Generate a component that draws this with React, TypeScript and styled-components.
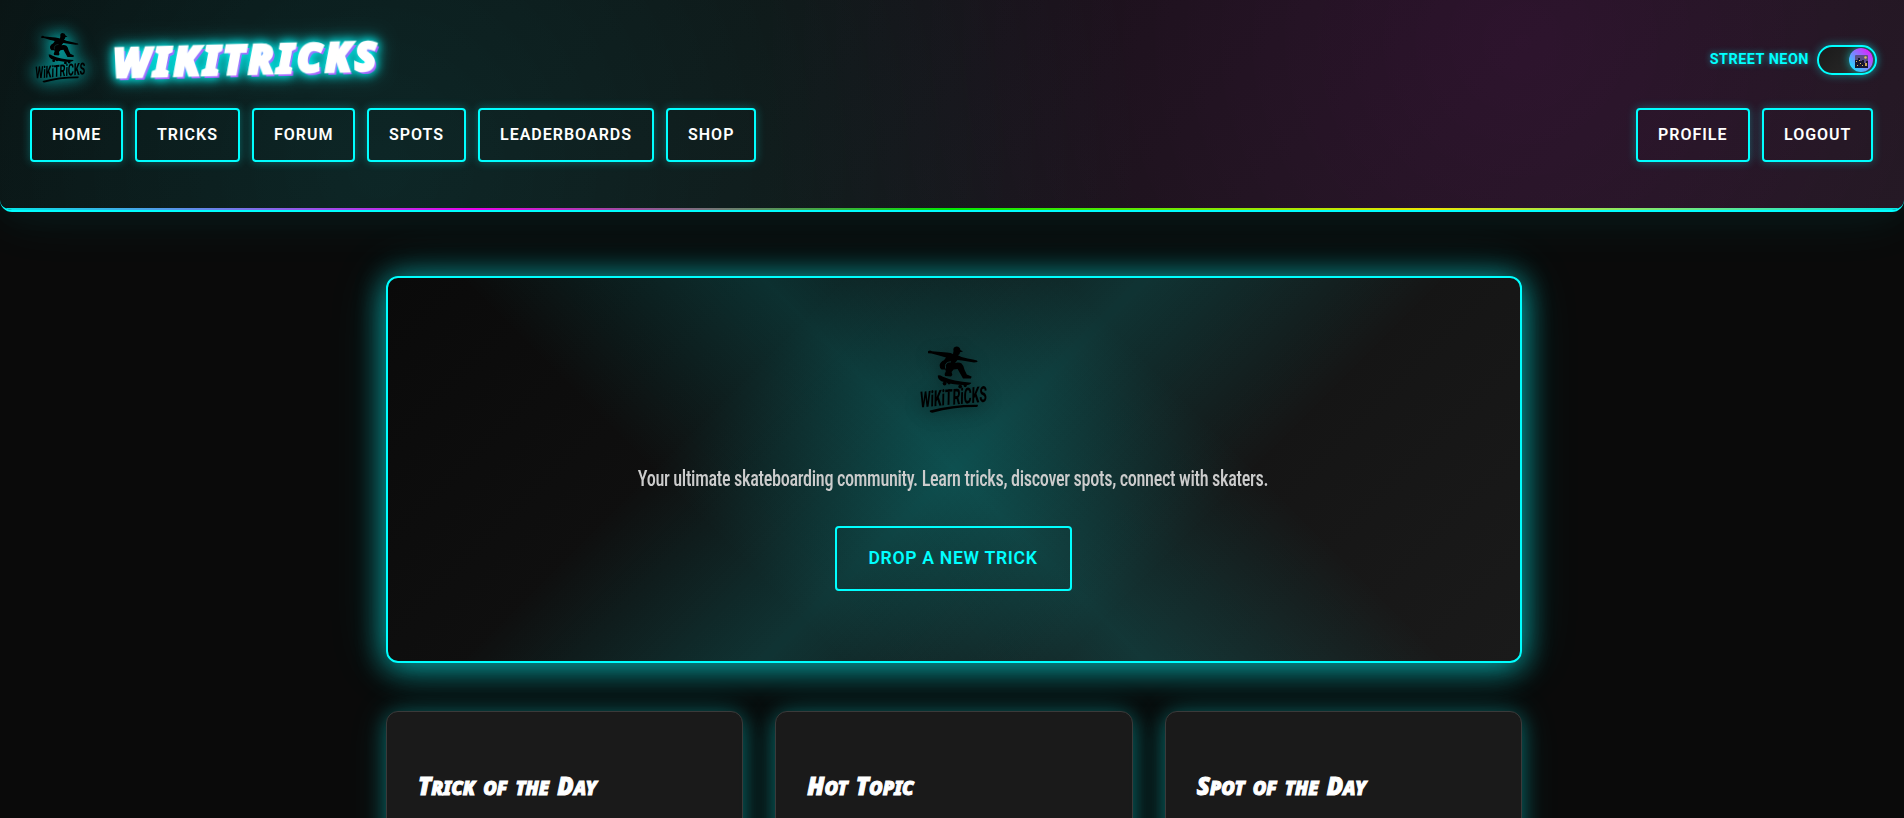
import React from "react";
import styled, { createGlobalStyle } from "styled-components";

const cyan = "#00ffff";

const GlobalStyle = createGlobalStyle`
  * { box-sizing: border-box; }
  body {
    margin: 0;
    background: #0a0a0a;
    font-family: Roboto, "Liberation Sans", sans-serif;
    color: #fff;
  }
`;

const Page = styled.div`
  height: 818px;
  overflow: hidden;
  background: #0a0a0a;
`;

const Header = styled.header`
  position: relative;
  height: 212px;
  padding: 28px 31px 0 30px;
  overflow: hidden;
  border-bottom: 2px solid ${cyan};
  border-radius: 0 0 12px 12px;
  background:
    radial-gradient(circle at 20% 80%, rgba(0, 255, 255, 0.1) 0%, transparent 50%),
    radial-gradient(circle at 80% 20%, rgba(255, 0, 255, 0.1) 0%, transparent 50%),
    linear-gradient(135deg, #0a0a0a 0%, #1a1a1a 100%);

  &::after {
    content: "";
    position: absolute;
    left: 0;
    right: 0;
    bottom: 0;
    height: 2px;
    opacity: 0.9;
    background: linear-gradient(90deg, #00ffff, #ff00ff, #00ff00, #ffff00, #00ffff);
  }
`;

const HeaderGlow = styled.div`
  border-radius: 0 0 12px 12px;
  box-shadow: 0 8px 32px rgba(0, 255, 255, 0.03), 0 4px 60px rgba(0, 255, 255, 0.07);
`;

const TopRow = styled.div`
  display: flex;
  align-items: center;
  justify-content: space-between;
  height: 60px;
  margin-bottom: 20px;
`;

const Brand = styled.div`
  display: flex;
  align-items: center;
  gap: 23px;
`;

const LogoArt = styled.svg<{ $size: number; $neon?: boolean }>`
  display: block;
  width: ${(p) => p.$size}px;
  height: ${(p) => p.$size}px;
  overflow: visible;
  filter: ${(p) =>
    p.$neon
      ? "drop-shadow(0 0 8px rgba(0, 255, 255, 0.6)) drop-shadow(0 0 8px rgba(0, 255, 255, 0.45))"
      : "drop-shadow(0 4px 8px rgba(0, 0, 0, 0.35))"};
`;

const BrandName = styled.h1`
  margin: 2px 0 0;
  font-family: "Noto Sans", sans-serif;
  font-size: 40px;
  line-height: 48px;
  font-weight: 900;
  font-style: italic;
  letter-spacing: 2.9px;
  text-transform: uppercase;
  color: #fff;
  -webkit-text-stroke: 2.4px #fff;
  transform: rotate(-1.5deg);
  text-shadow: 0 0 10px rgba(0, 255, 255, 0.6), 2.5px 2.5px 0 #c050ff;
  filter: drop-shadow(0 0 5px rgba(0, 255, 255, 0.75)) drop-shadow(0 0 8px rgba(0, 255, 255, 0.55));
`;

const ThemeControl = styled.div`
  display: flex;
  align-items: center;
  gap: 8px;
  margin: 4px -4px 0 0;
`;

const ThemeLabel = styled.span`
  font-size: 14.4px;
  font-weight: 700;
  letter-spacing: 0.5px;
  line-height: 18px;
  text-transform: uppercase;
  color: ${cyan};
  text-shadow: 0 0 6px rgba(0, 255, 255, 0.6);
`;

const Toggle = styled.div`
  display: flex;
  align-items: center;
  justify-content: flex-end;
  width: 60px;
  height: 30px;
  padding: 0 2px;
  border: 2px solid ${cyan};
  border-radius: 15px;
  background: linear-gradient(135deg, #1a1a1a, #2d2d2d);
  box-shadow: 0 0 10px rgba(0, 255, 255, 0.4);
`;

const Knob = styled.div`
  display: flex;
  align-items: center;
  justify-content: center;
  width: 24px;
  height: 24px;
  padding-top: 3px;
  border-radius: 50%;
  background: linear-gradient(45deg, #00ffff, #ff00ff);
  box-shadow: 0 0 10px rgba(0, 255, 255, 0.6);
`;

const NavRow = styled.nav`
  display: flex;
  justify-content: space-between;
`;

const NavGroup = styled.div`
  display: flex;
  gap: 12px;
`;

const NavButton = styled.a<{ $w: number }>`
  display: flex;
  align-items: center;
  width: ${(p) => p.$w}px;
  height: 54px;
  padding: 0 0 1px 20px;
  border: 2px solid ${cyan};
  border-radius: 4px;
  box-shadow: 0 0 10px rgba(0, 255, 255, 0.3);
  font-size: 16px;
  font-weight: 600;
  letter-spacing: 1px;
  text-transform: uppercase;
  white-space: nowrap;
`;

const Main = styled.main`
  width: 1136px;
  margin: 64px 0 0 386px;
`;

const Hero = styled.section`
  display: flex;
  flex-direction: column;
  align-items: center;
  height: 387px;
  padding: 62px 2px 0 0;
  border: 2px solid ${cyan};
  border-radius: 12px;
  background:
    linear-gradient(45deg, transparent 30%, rgba(0, 255, 255, 0.14) 50%, transparent 70%),
    linear-gradient(-45deg, transparent 30%, rgba(0, 255, 255, 0.14) 50%, transparent 70%),
    linear-gradient(135deg, #0a0a0a 0%, #1a1a1a 100%);
  box-shadow: 0 0 30px rgba(0, 255, 255, 0.4), 0 8px 32px rgba(0, 255, 255, 0.35),
    0 0 60px rgba(0, 255, 255, 0.15);
`;

const Tagline = styled.p`
  margin: 43px 0 31px;
  font-size: 21.8px;
  line-height: 32px;
  font-weight: 500;
  font-stretch: 75%;
  letter-spacing: -0.4px;
  white-space: nowrap;
  color: #cccccc;
  transform: scaleX(0.836);
`;

const HeroButton = styled.button`
  display: flex;
  align-items: center;
  justify-content: center;
  width: 237px;
  height: 65px;
  padding: 0 0 1px;
  border: 2px solid ${cyan};
  border-radius: 4px;
  background: transparent;
  color: ${cyan};
  font: 600 17.6px Roboto, sans-serif;
  letter-spacing: 0.7px;
  white-space: nowrap;
  text-transform: uppercase;
`;

const CardGrid = styled.div`
  display: grid;
  grid-template-columns: repeat(3, 1fr);
  gap: 32px;
  margin-top: 48px;
`;

const Card = styled.article`
  height: 240px;
  padding: 58px 31px 0;
  border: 1px solid #3a3a3a;
  border-radius: 12px;
  background: #1a1a1a;
  box-shadow: 0 4px 20px rgba(0, 255, 255, 0.35), 0 0 40px rgba(0, 255, 255, 0.12);
`;

const CardTitle = styled.h2`
  display: flex;
  align-items: baseline;
  gap: 8px;
  margin: 0;
  font-family: "Noto Sans", sans-serif;
  font-size: 18.5px;
  line-height: 32px;
  font-weight: 900;
  font-style: italic;
  text-transform: uppercase;
  white-space: nowrap;
  -webkit-text-stroke: 1px #fff;
`;

const Word = styled.span<{ $capital: boolean }>`
  display: inline-block;
  &::first-letter {
    font-size: ${(p) => (p.$capital ? "24px" : "1em")};
  }
`;

function Logo({ size, neon }: { size: number; neon?: boolean }) {
  return (
    <LogoArt $size={size} $neon={neon} viewBox="0 0 80 80" fill="#000">
      <path d="M15 11.2 Q17 9.6 19 11.2 L34 12.6 Q38 13 40 14 L40.5 11 Q39.6 7 43.5 6.6 Q47 6.8 47.4 10 L50 11.4 L47 12.2 Q47 14.6 45 15.2 L48.5 17 Q55 18.6 60 19.6 L64 20.6 L64.6 22 L61 22.4 L49 20.6 L44.5 20 L42 23 Q46 22 48.6 23.6 Q50.6 25.4 51.6 30 L53.8 34.4 L58.6 36.6 L58 38.6 L50 38.6 L44.6 29 L40.6 29.6 L38.6 32 L39.4 35 L38 36.6 L32 36 L31.6 34 L32.8 31.6 L32.4 29.6 L28.6 29.6 Q26.4 28 26.6 25 Q27.4 21.6 31 20.2 L33 17.4 L26 15.6 L18.6 13.4 L15 13.2 Z" />
      <path d="M38 21.8 Q33 22 32.4 25.4 L32.6 28.6" fill="none" stroke="#123b3b" strokeWidth="0.8" />
      <path d="M24.8 35.4 Q27 34.6 29.4 36.6 Q40 41.4 58.4 42.8 Q57.4 45.2 53 45.2 Q38 44.8 28.4 41.2 Q24.6 39 24.8 35.4 Z" />
      <circle cx="31.6" cy="43.6" r="1.9" />
      <circle cx="36" cy="42.8" r="1.6" />
      <circle cx="47.2" cy="46.6" r="1.9" />
      <circle cx="52.2" cy="45.6" r="1.6" />
      <text
        x="7"
        y="67.5"
        transform="rotate(-5 7 67) skewX(-6)"
        textLength="67"
        lengthAdjust="spacingAndGlyphs"
        dx="7"
        fontFamily="Roboto"
        fontWeight="800"
        fontSize="22"
      >
        WiKiTRiCKS
      </text>
      <path d="M16.8 70.6 Q40 64.4 64.8 64.8 Q65.6 66.6 63.6 67 Q40 66.8 19.4 72.8 Q16.4 72.6 16.8 70.6 Z" />
    </LogoArt>
  );
}

function CityIcon() {
  return (
    <svg width="13" height="13" viewBox="0 0 13 13">
      <rect width="13" height="13" rx="1" fill="#5b4f86" />
      <circle cx="10.5" cy="2.5" r="1.2" fill="#e8c35a" />
      <path d="M0 5h3V3h2v3h2V5h2v3h2V6h2v7H0z" fill="#17162e" />
      <path d="M1 6h1v1H1zM4 5h1v1H4zM5 8h1v1H5zM2 10h1v1H2zM7 10h1v1H7z" fill="#d9b95c" />
      <path d="M10 8h2v3h-2z" fill="#c9a24f" />
    </svg>
  );
}

const links = [
  { label: "Home", w: 93 },
  { label: "Tricks", w: 105 },
  { label: "Forum", w: 103 },
  { label: "Spots", w: 99 },
  { label: "Leaderboards", w: 176 },
  { label: "Shop", w: 90 },
];

const accountLinks = [
  { label: "Profile", w: 114 },
  { label: "Logout", w: 111 },
];

const cards = ["Trick of the Day", "Hot Topic", "Spot of the Day"];

export default function App() {
  return (
    <Page>
      <GlobalStyle />
      <HeaderGlow>
        <Header>
          <TopRow>
            <Brand>
              <Logo size={60} neon />
              <BrandName>WikiTricks</BrandName>
            </Brand>
            <ThemeControl>
              <ThemeLabel>Street Neon</ThemeLabel>
              <Toggle>
                <Knob>
                  <CityIcon />
                </Knob>
              </Toggle>
            </ThemeControl>
          </TopRow>
          <NavRow>
            <NavGroup>
              {links.map((l) => (
                <NavButton key={l.label} $w={l.w}>{l.label}</NavButton>
              ))}
            </NavGroup>
            <NavGroup>
              {accountLinks.map((l) => (
                <NavButton key={l.label} $w={l.w}>{l.label}</NavButton>
              ))}
            </NavGroup>
          </NavRow>
        </Header>
      </HeaderGlow>
      <Main>
        <Hero>
          <Logo size={80} />
          <Tagline>
            Your ultimate skateboarding community. Learn tricks, discover spots, connect with skaters.
          </Tagline>
          <HeroButton>Drop a new trick</HeroButton>
        </Hero>
        <CardGrid>
          {cards.map((title) => (
            <Card key={title}>
              <CardTitle>
                {title.split(" ").map((w) => (
                  <Word key={w} $capital={w[0] !== w[0].toLowerCase()}>{w}</Word>
                ))}
              </CardTitle>
            </Card>
          ))}
        </CardGrid>
      </Main>
    </Page>
  );
}
